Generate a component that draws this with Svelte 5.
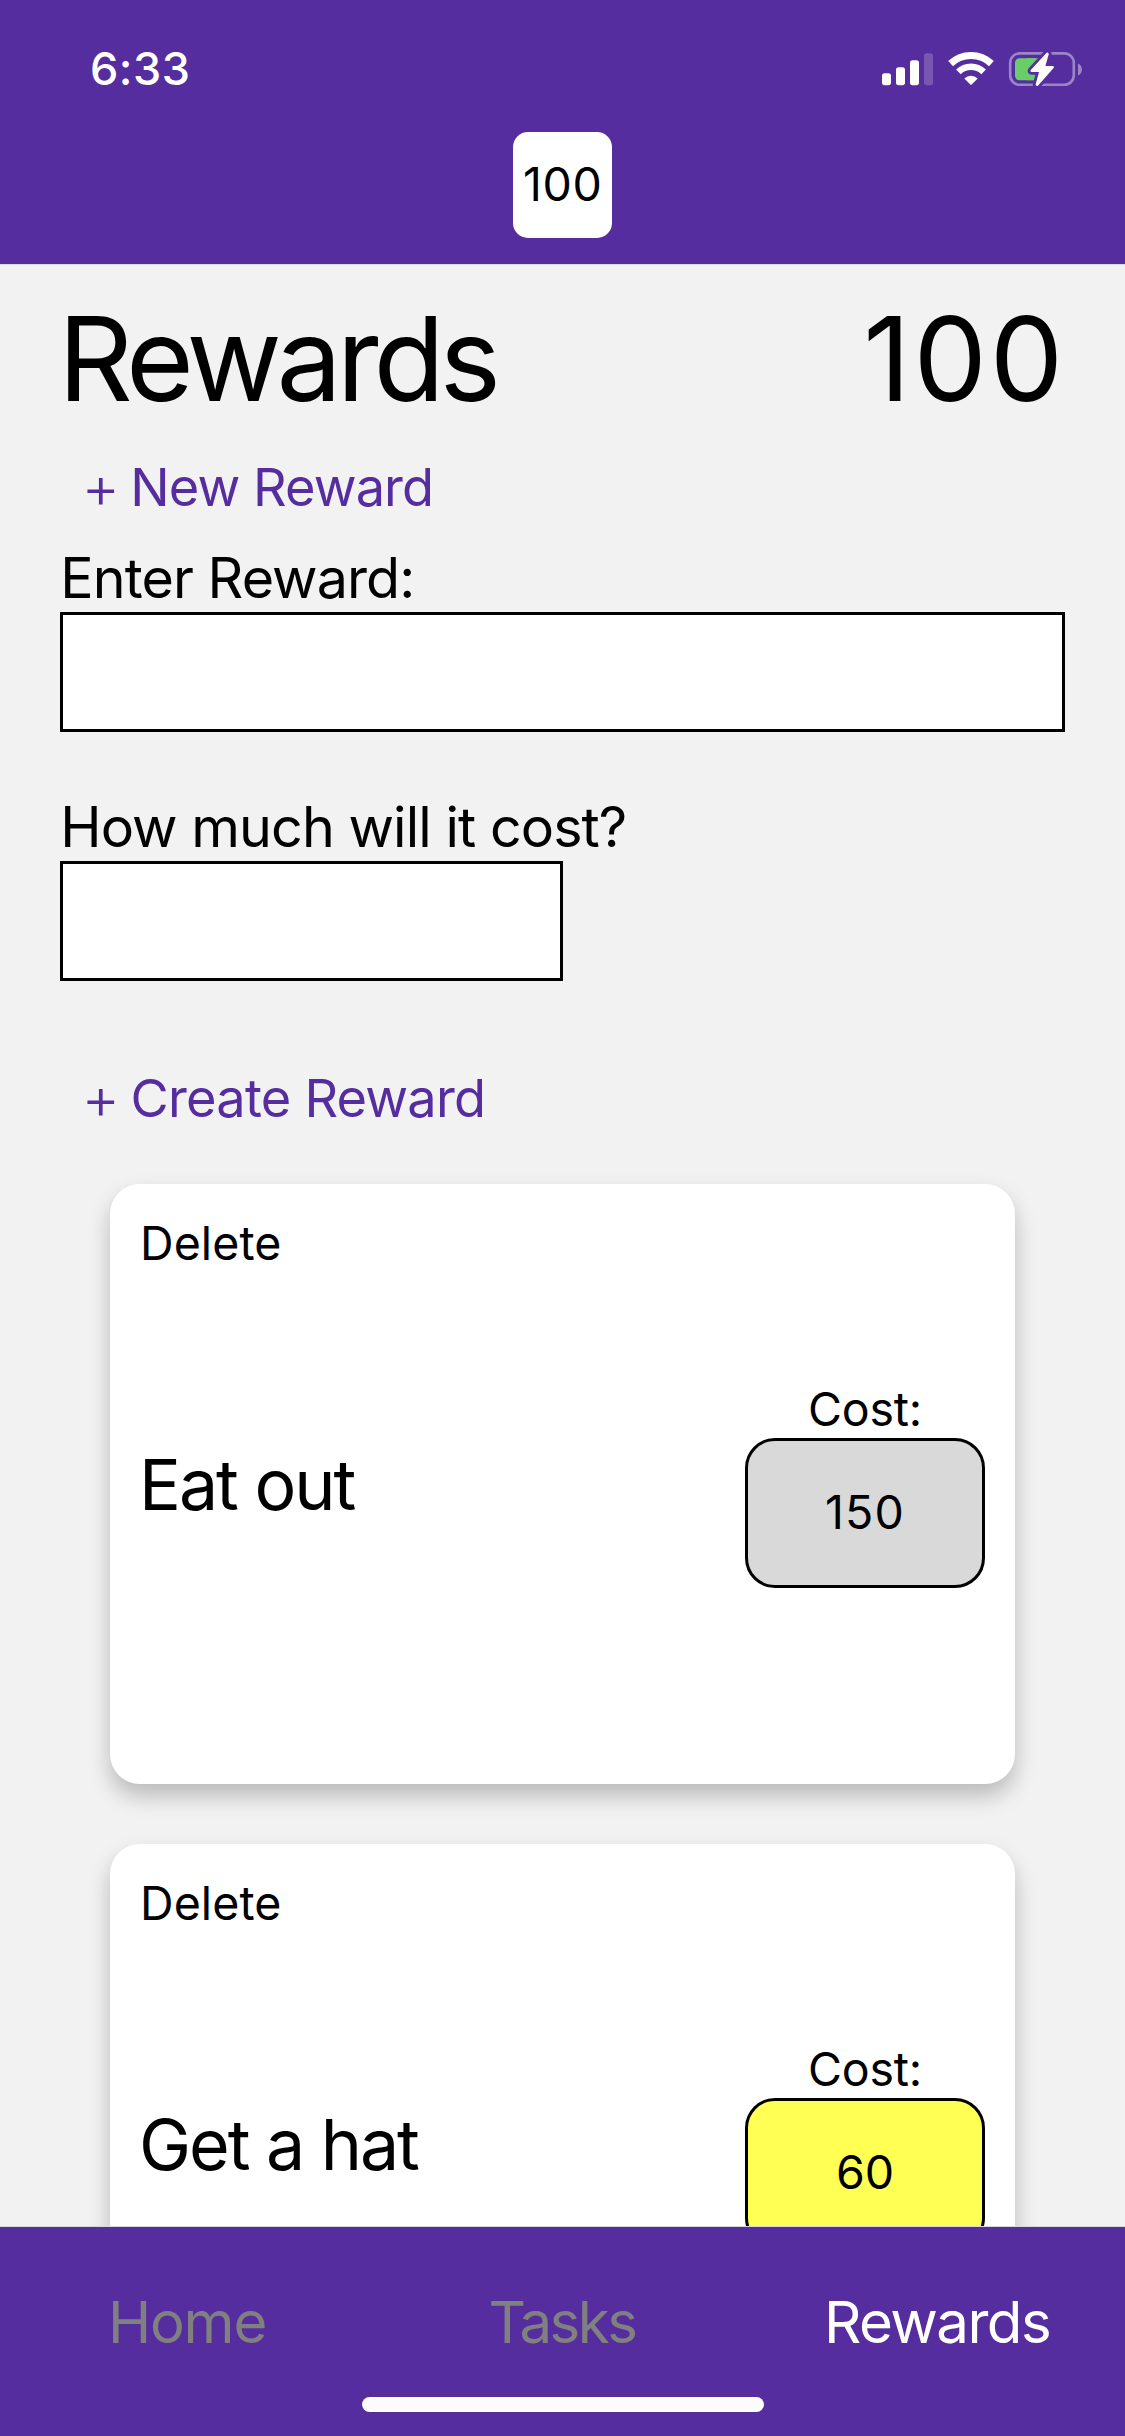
<script>
  const balance = 100;
  const rewards = [
    { name: 'Eat out', cost: 150, affordable: false },
    { name: 'Get a hat', cost: 60, affordable: true }
  ];
  const tabs = ['Home', 'Tasks', 'Rewards'];
  const active = 'Rewards';
</script>

<div class="screen">
  <header>
    <div class="status">
      <span class="time">6:33</span>
      <svg class="icons" viewBox="0 0 202 36" width="202" height="36" aria-hidden="true">
        <!-- cellular signal -->
        <g fill="#fff">
          <rect x="0" y="22.2" width="9" height="12" rx="2.6" />
          <rect x="14" y="16.2" width="9" height="18" rx="2.6" />
          <rect x="28" y="9.2" width="9" height="25" rx="2.6" />
          <rect x="42" y="2.2" width="9" height="32" rx="2.6" opacity=".2" />
        </g>
        <!-- wifi -->
        <g fill="none" stroke="#fff">
          <path d="M68.6 12.6A29.5 29.5 0 0 1 109.4 12.6" stroke-width="7" />
          <path d="M76.4 20.9A18 18 0 0 1 101.6 20.9" stroke-width="6.6" />
        </g>
        <path d="M82.3 27.4A9.8 9.8 0 0 1 95.7 27.4L89.7 33.6Q89 34.3 88.3 33.6Z" fill="#fff" />
        <!-- battery -->
        <rect x="128.2" y="2.4" width="63.6" height="31.4" rx="9.5" fill="none" stroke="#fff" stroke-opacity=".42" stroke-width="2.6" />
        <path d="M196 12.4C201.3 14.4 201.3 22.4 196 24.4Z" fill="#fff" opacity=".42" />
        <rect x="133" y="7.2" width="23" height="22" rx="4.5" fill="#68ce67" />
        <rect x="145" y="7.2" width="13" height="22" fill="#68ce67" />
        <path d="M164.6 1.8L148.8 19Q147.8 21 149.8 21H157L153.6 33.6Q154.4 36.2 156.4 34.2L171.8 16.8Q172.4 15 170.4 15H163.4L166.8 3Q166.2 .6 164.6 1.8Z" fill="#fff" stroke="#552d9e" stroke-width="5.6" paint-order="stroke" />
      </svg>
    </div>
    <div class="badge"><span>{balance}</span></div>
  </header>

  <main>
    <div class="heading">
      <h1>Rewards</h1>
      <span class="total">{balance}</span>
    </div>
    <button class="link"><span class="plus">{'+ '}</span>New Reward</button>
    <label class="question first" for="reward">Enter Reward:</label>
    <input id="reward" />
    <label class="question" for="cost">How much will it cost?</label>
    <input id="cost" class="half" />
    <button class="link create"><span class="plus">{'+ '}</span>Create Reward</button>

    <div class="cards">
      {#each rewards as reward}
        <article>
          <button class="delete">Delete</button>
          <div class="row">
            <h2>{reward.name}</h2>
            <div class="price">
              <span class="caption">Cost:</span>
              <button class="amount" class:affordable={reward.affordable}>
                <span class:wide={reward.cost >= 100}>{reward.cost}</span>
              </button>
            </div>
          </div>
        </article>
      {/each}
    </div>
  </main>

  <footer>
    <nav>
      {#each tabs as tab}
        <span class="tab" class:active={tab === active} class:tight={tab === 'Tasks'}>{tab}</span>
      {/each}
    </nav>
    <div class="indicator"></div>
  </footer>
</div>

<style>
  :global(body) {
    margin: 0;
  }
  .screen {
    display: flex;
    flex-direction: column;
    width: 1125px;
    height: 2436px;
    overflow: hidden;
    background: #f2f2f2;
    color: #000;
    font-family: Inter, 'Liberation Sans', sans-serif;
    font-size: 46.5px;
  }
  button {
    font: inherit;
    color: inherit;
    background: none;
    border: 0;
    padding: 0;
    text-align: left;
  }
  h1,
  h2 {
    margin: 0;
    font-weight: 400;
  }
  header {
    box-sizing: border-box;
    height: 265px;
    flex: none;
    background: #552d9e;
    border-bottom: 1px solid #d8d8d8;
  }
  .status {
    box-sizing: border-box;
    height: 132px;
    padding: 5px 41px 0 90px;
    display: flex;
    align-items: center;
    justify-content: space-between;
    color: #fff;
  }
  .time {
    font-size: 45px;
    font-weight: 550;
    letter-spacing: 0.5px;
  }
  .icons {
    display: block;
  }
  .badge {
    box-sizing: border-box;
    width: 99px;
    height: 106px;
    margin: 0 auto;
    padding: 0 0 2px 10px;
    display: flex;
    align-items: center;
    background: #fff;
    border-radius: 15px;
    letter-spacing: 0.6px;
  }
  main {
    flex: 1;
    min-height: 0;
    overflow: hidden;
    display: flex;
    flex-direction: column;
    align-items: flex-start;
    padding: 0 60px;
  }
  main > * {
    flex: none;
  }
  .heading {
    box-sizing: border-box;
    width: 1008px;
    height: 187px;
    margin: 0 -2px;
    padding-top: 2px;
    display: flex;
    align-items: center;
    justify-content: space-between;
    font-size: 116.4px;
    line-height: 1;
  }
  h1 {
    font-size: inherit;
    letter-spacing: -5.2px;
  }
  .total {
    letter-spacing: 2.82px;
  }
  .link {
    height: 70px;
    line-height: 70px;
    margin-left: 21.5px;
    font-size: 52.3px;
    letter-spacing: -0.9px;
    color: #552d9e;
    white-space: pre;
  }
  .plus {
    font-size: 59px;
    font-weight: 350;
    line-height: 0;
    vertical-align: -2px;
    word-spacing: -4.6px;
  }
  .create {
    margin-top: 82px;
    letter-spacing: -0.76px;
  }
  .question {
    height: 68px;
    line-height: 68px;
    margin: 61px 0 0 0.3px;
    font-size: 55.6px;
    letter-spacing: -0.93px;
  }
  .first {
    margin-top: 22px;
  }
  input {
    box-sizing: border-box;
    width: 1005px;
    height: 120px;
    padding: 0 12px;
    border: 3px solid #000;
    border-radius: 0;
    background: #fff;
    font: inherit;
    outline: 0;
  }
  .half {
    width: 503px;
  }
  .cards {
    align-self: center;
    margin-top: 51px;
    display: flex;
    flex-direction: column;
    gap: 60px;
  }
  article {
    box-sizing: border-box;
    width: 905px;
    height: 600px;
    padding: 30px 30px 88px;
    display: flex;
    flex-direction: column;
    background: #fff;
    border-radius: 30px;
    box-shadow: 0 12px 22px rgba(0, 0, 0, 0.23);
  }
  .delete {
    height: 58px;
    line-height: 58px;
    align-self: flex-start;
    letter-spacing: 0.1px;
  }
  .row {
    flex: 1;
    display: flex;
    align-items: center;
    justify-content: space-between;
  }
  h2 {
    margin-left: -1px;
    font-size: 69.8px;
    letter-spacing: -2.05px;
  }
  .price {
    width: 240px;
    display: flex;
    flex-direction: column;
    align-items: center;
  }
  .caption {
    height: 58px;
    line-height: 58px;
    letter-spacing: -0.23px;
  }
  .amount {
    box-sizing: border-box;
    width: 240px;
    height: 150px;
    padding-bottom: 2px;
    display: flex;
    align-items: center;
    justify-content: center;
    background: #d9d9d9;
    border: 3px solid #000;
    border-radius: 30px;
  }
  .affordable {
    background: #ffff54;
  }
  .wide {
    letter-spacing: 1.2px;
  }
  footer {
    box-sizing: border-box;
    height: 210px;
    flex: none;
    background: #552d9e;
    border-top: 1px solid #d8d8d8;
  }
  nav {
    box-sizing: border-box;
    height: 170px;
    padding-top: 20px;
    display: grid;
    grid-template-columns: repeat(3, 1fr);
    align-items: center;
    justify-items: center;
    font-size: 58.2px;
    color: #808080;
  }
  .tab {
    margin-right: 1px;
    letter-spacing: -1.2px;
  }
  .tight {
    letter-spacing: -2.5px;
  }
  .active {
    color: #fff;
    letter-spacing: -1.55px;
  }
  .indicator {
    width: 402px;
    height: 15px;
    margin: 0 auto;
    background: #fcfcfc;
    border-radius: 8px;
  }
</style>
